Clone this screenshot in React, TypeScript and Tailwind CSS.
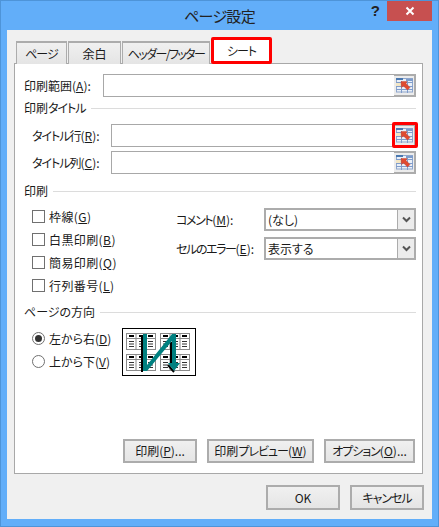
import React from "react";

const font = "[font-family:'Noto_Sans_CJK_JP','Noto_Sans',sans-serif] [font-feature-settings:'palt']";

function K({ children }: { children: React.ReactNode }) {
  return <span className="tracking-[-1px]">{children}</span>;
}

function RefIcon() {
  return (
    <svg width="17" height="15" viewBox="0 0 17 15">
      <rect x="0.5" y="0.5" width="16" height="13.5" fill="#eaf0f8" stroke="#8ea6cc" strokeWidth="1" />
      <rect x="0" y="0" width="7" height="2" fill="#4a78b0" />
      <rect x="10" y="1" width="7" height="2" fill="#7d9ccb" />
      <rect x="0" y="5" width="5" height="3" fill="#f3e6c4" />
      <path d="M0 4.5H17M0 8.5H17M0 11.5H17M5.5 3V15M11.5 3V15" stroke="#7f9ccb" strokeWidth="1" fill="none" />
      <path d="M5 3.5 H11 L10 5.5 L14 9.5 L11.5 12 L7.5 8 L5.5 9.5 Z" fill="#e04a30" stroke="#c23b28" strokeWidth="0.4" />
    </svg>
  );
}

function RefButton() {
  return (
    <div className="w-[22px] h-[23px] shrink-0 border-2 border-l-0 border-[#acacac] bg-[#ececec] flex items-center justify-center">
      <RefIcon />
    </div>
  );
}

function RefField({ label, mn, inputLeft, highlighted }: { label: React.ReactNode; mn: string; inputLeft: string; highlighted?: boolean }) {
  return (
    <div className="flex items-center h-[23px]">
      <span className={`${inputLeft} shrink-0 text-[12px] leading-none text-[#1a1a1a] whitespace-nowrap`}>
        {label}(<u>{mn}</u>):
      </span>
      <div className="flex-1 h-[23px] border border-[#a8a8a8] border-r-0 bg-white" />
      <div className="relative">
        <RefButton />
        {highlighted && <div className="absolute -left-[2px] -top-[2px] w-[26px] h-[26px] border-[3px] border-[#ff0000] rounded-[2px]" />}
      </div>
    </div>
  );
}

function Heading({ children, className }: { children: React.ReactNode; className?: string }) {
  return (
    <div className={`flex items-center h-[18px] gap-[5px] ${className ?? ""}`}>
      <span className="text-[12px] leading-none text-[#1a1a1a] whitespace-nowrap">{children}</span>
      <div className="flex-1 h-px bg-[#dcdcdc]" />
    </div>
  );
}

function Check({ label, mn }: { label: string; mn: string }) {
  return (
    <div className="flex items-center h-[23px] pl-[8px] gap-[4px]">
      <div className="w-[13px] h-[13px] border border-[#707070] bg-white" />
      <span className="text-[12px] leading-none text-[#1a1a1a] tracking-[0.4px]">
        {label}(<u>{mn}</u>)
      </span>
    </div>
  );
}

function Radio({ label, mn, on }: { label: string; mn: string; on?: boolean }) {
  return (
    <div className="flex items-center h-[23px] pl-[8px] gap-[4px]">
      <div className="w-[13px] h-[13px] rounded-full border border-[#707070] bg-white flex items-center justify-center">
        {on && <div className="w-[7px] h-[7px] rounded-full bg-[#333]" />}
      </div>
      <span className="text-[12px] leading-none text-[#1a1a1a]">
        {label}(<u>{mn}</u>)
      </span>
    </div>
  );
}

function Select({ label, mn, value, className }: { label: React.ReactNode; mn: string; value: string; className?: string }) {
  return (
    <div className={`flex items-center h-[23px] ${className ?? ""}`}>
      <span className="w-[88px] shrink-0 text-[12px] leading-none text-[#1a1a1a] whitespace-nowrap">
        {label}(<u>{mn}</u>):
      </span>
      <div className="flex-1 h-[23px] border-2 border-[#acacac] bg-white flex items-center">
        <span className="flex-1 pl-[2px] text-[12px] leading-none text-[#1a1a1a]">{value}</span>
        <div className="w-[17px] h-full bg-[#ececec] border-l border-[#acacac] flex items-center justify-center">
          <svg width="9" height="7" viewBox="0 0 9 7">
            <path d="M1 1.5 L4.5 5 L8 1.5" fill="none" stroke="#555" strokeWidth="2" />
          </svg>
        </div>
      </div>
    </div>
  );
}

function Btn({ className, children }: { className?: string; children: React.ReactNode }) {
  return (
    <div className={`h-[24px] border-2 border-[#acacac] bg-gradient-to-b from-[#f0f0f0] to-[#e5e5e5] flex items-center justify-center text-[12px] leading-none text-[#1a1a1a] whitespace-nowrap ${className ?? ""}`}>
      {children}
    </div>
  );
}

function Mini({ x, y }: { x: number; y: number }) {
  return (
    <g transform={`translate(${x},${y})`}>
      <rect x="0.5" y="0.5" width="29" height="16" fill="#fff" stroke="#8a8a8a" />
      <path d="M10 0V17M20 0V17M0 5.5H30" stroke="#8a8a8a" />
      <path d="M3 3H8M13 3H18M22 3H27" stroke="#000" strokeWidth="2" />
      <path d="M3 8.5H8M3 11H8M3 13.5H8M13 8.5H18M13 11H18M13 13.5H18M22 8.5H27M22 11H27M22 13.5H27" stroke="#333" />
    </g>
  );
}

function Orientation() {
  return (
    <svg width="74" height="48" viewBox="0 0 74 48" className="block">
      <rect x="0.5" y="0.5" width="73" height="47" fill="#fff" stroke="#000" />
      <Mini x={4} y={5} />
      <Mini x={38} y={5} />
      <Mini x={4} y={26} />
      <Mini x={38} y={26} />
      <rect x="19" y="8" width="2" height="36" fill="#000" />
      <rect x="48" y="14" width="2" height="24" fill="#000" />
      <path d="M46 37 L52 44" stroke="#000" strokeWidth="2" fill="none" />
      <path d="M21 6H25V37L50 6H54V35H58L52 43L46 35H50V13L25 43H21Z" fill="#008080" />
    </svg>
  );
}

function Tab({ className, children }: { className?: string; children: React.ReactNode }) {
  return (
    <div className={`h-[23px] border border-b-0 border-[#acacac] border-t-2 bg-gradient-to-b from-[#f0f0f0] to-[#e5e5e5] flex items-center justify-center text-[12px] leading-none text-[#1a1a1a] whitespace-nowrap ${className ?? ""}`}>
      {children}
    </div>
  );
}

export default function App() {
  return (
    <div className={`${font} w-[439px] h-[527px] bg-[#62aef9] border border-[#4e94d8] flex flex-col overflow-hidden`}>
      <div className="relative h-[29px] shrink-0 flex items-center justify-center text-[15px] leading-none text-[#222]">
        <span className="tracking-[-0.7px]">ページ設定</span>
        <span className="absolute right-[58px] top-[2px] text-[15px] font-bold text-[#222] [font-family:'Liberation_Sans',sans-serif]">?</span>
        <div className="absolute right-[6px] top-0 w-[45px] h-[20px] bg-[#c75050] flex items-center justify-center">
          <svg width="10" height="10" viewBox="0 0 10 10">
            <path d="M1.5 1.5 L8.5 8.5 M8.5 1.5 L1.5 8.5" stroke="#fff" strokeWidth="2" />
          </svg>
        </div>
      </div>
      <div className="ml-[6px] w-[425px] h-[489px] bg-[#f0f0f0] flex flex-col pl-[7px]">
        <div className="h-[34px] shrink-0 flex items-end pl-[2px] gap-px relative z-10">
          <Tab className="w-[51px]"><K>ページ</K></Tab>
          <Tab className="w-[53px]">余白</Tab>
          <Tab className="w-[88px]"><span className="tracking-[-1.6px]">ヘッダー/フッター</span></Tab>
          <div className="w-[61px] h-[27px] border-[3px] border-[#ff0000] rounded-[2px] bg-white flex items-center justify-center text-[12px] leading-none text-[#1a1a1a]">
            <K>シート</K>
          </div>
        </div>
        <div className="-mt-px w-[409px] h-[411px] shrink-0 border border-[#a8a8a8] bg-white flex flex-col pl-[9px] pr-[6px] pt-[10px] pb-[10px]">
          <RefField label="印刷範囲" mn="A" inputLeft="w-[79px]" />
          <Heading className="mt-[2px]">印刷<K>タイトル</K></Heading>
          <div className="mt-[7px] pl-[8px]">
            <RefField label={<K>タイトル行</K>} mn="R" inputLeft="w-[79px]" highlighted />
          </div>
          <div className="mt-[4px] pl-[8px]">
            <RefField label={<K>タイトル列</K>} mn="C" inputLeft="w-[79px]" />
          </div>
          <Heading className="mt-[8px]">印刷</Heading>
          <div className="flex mt-[5px]">
            <div className="w-[152px] shrink-0">
              <Check label="枠線" mn="G" />
              <Check label="白黒印刷" mn="B" />
              <Check label="簡易印刷" mn="Q" />
              <Check label="行列番号" mn="L" />
            </div>
            <div className="flex-1 pt-[3px]">
              <Select label={<span className="tracking-[-1.4px]">コメント</span>} mn="M" value="(なし)" />
              <Select label={<span className="tracking-[-1.4px]">セルのエラー</span>} mn="E" value="表示する" className="mt-[6px]" />
            </div>
          </div>
          <Heading className="mt-[6px]">ページの方向</Heading>
          <div className="flex mt-[6px]">
            <div className="w-[98px] shrink-0">
              <Radio label="左から右" mn="D" on />
              <Radio label="上から下" mn="V" />
            </div>
            <div className="mt-px">
              <Orientation />
            </div>
          </div>
          <div className="mt-auto flex justify-end gap-[10px] pr-px">
            <Btn className="w-[74px]">印刷(<u>P</u>)...</Btn>
            <Btn className="w-[107px]">印刷<K>プレビュー</K>(<u>W</u>)</Btn>
            <Btn className="w-[91px]"><K>オプション</K>(<u>O</u>)...</Btn>
          </div>
        </div>
        <div className="mt-[11px] flex justify-end gap-[10px] pr-[8px]">
          <Btn className="w-[74px] h-[25px] border-[#5a9fe0]">OK</Btn>
          <Btn className="w-[74px] h-[25px]"><K>キャンセル</K></Btn>
        </div>
      </div>
    </div>
  );
}
